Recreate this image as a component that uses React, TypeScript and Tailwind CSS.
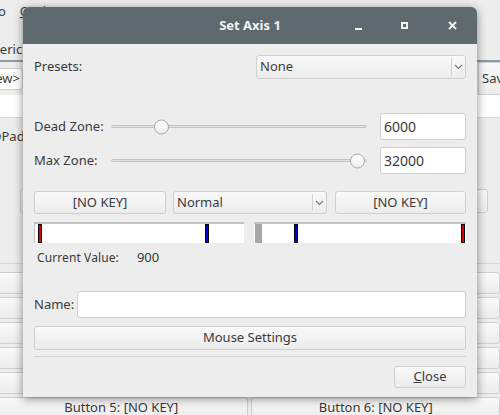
import React from "react";

const btnBase =
  "flex items-center rounded-[3px] border border-[#cfcfcf] bg-gradient-to-b from-[#f9f9f9] to-[#ececec] text-[13px] text-[#3a3a3a]";
const btn = `${btnBase} justify-center`;
const field = "rounded-[3px] border border-[#cfcfcf] bg-white";

function Chevron() {
  return (
    <svg width="9" height="6" viewBox="0 0 9 6" className="text-[#7a7a7a]">
      <polyline points="1,1 4.5,4.5 8,1" fill="none" stroke="currentColor" strokeWidth="1.2" />
    </svg>
  );
}

function Combo({ label, w }: { label: string; w: string }) {
  return (
    <div className={`${btnBase} ${w} justify-between pl-[3px]`}>
      <span>{label}</span>
      <div className="flex h-full items-center">
        <div className="h-[80%] w-px bg-[#d3d3d3]" />
        <div className="flex w-[13px] items-center justify-center">
          <Chevron />
        </div>
      </div>
    </div>
  );
}

function Slider({ pos }: { pos: number }) {
  return (
    <div className="relative flex h-full w-[256px] items-center">
      <div className="h-[3px] w-full rounded-full border border-[#c4c4c4] bg-[#e2e2e2]" />
      <div
        className="absolute top-1/2 h-[15px] w-[15px] -translate-y-1/2 rounded-full border border-[#a9a9a9] bg-gradient-to-b from-white to-[#eeeeee]"
        style={{ left: pos }}
      />
    </div>
  );
}

function Marker({ left, color }: { left: number; color: string }) {
  return (
    <div
      className={`absolute top-0 bottom-0 w-[4px] border border-black ${color}`}
      style={{ left }}
    />
  );
}

function BgRow({ a, b }: { a: string; b: string }) {
  return (
    <div className="flex h-[22px] gap-[3px]">
      <div className={`${btn} -ml-[6px] w-[256px]`}>{a}</div>
      <div className={`${btn} w-[250px]`}>{b}</div>
    </div>
  );
}

export default function App() {
  return (
    <div className="relative h-[415px] w-[500px] overflow-hidden bg-[#ededed] font-['Noto_Sans',sans-serif] text-[13px] text-[#3a3a3a]">
      {/* main window behind */}
      <div className="flex flex-col">
        <div className="flex h-[24px] items-center gap-[14px]">
          <span className="-ml-[19px]">Info</span>
          <span>
            <span className="underline">O</span>ptions
          </span>
        </div>
        <div className="mt-[16px] flex h-[20px] items-center">
          <span className="-ml-[25px]">Generic</span>
        </div>
        <div className="h-[2px] bg-[#8d9aa1]" />
        <div className="flex h-[33px] items-center justify-between">
          <div className={`${field} -ml-[30px] flex h-[22px] w-[53px] items-center justify-end pr-[2px]`}>
            &lt;New&gt;
          </div>
          <div className={`${btnBase} -mr-[40px] h-[33px] w-[62px] rounded-none pl-[3px]`}>Save</div>
        </div>
        <div className="h-[23px] border-b border-[#d8d8d8] bg-white" />
        <div className="mt-[10px] flex h-[18px] items-center">
          <span className="-ml-[8px]">DPad</span>
        </div>
        <div className="mt-[43px] flex h-[24px] pl-[20px] pr-[12px]">
          <div className={`${btn} w-full`}>Stick</div>
        </div>
        <div className="mt-[50px] h-px bg-[#d6d6d6]" />
        <div className="mt-[8px] flex flex-col gap-[3px]">
          <BgRow a="Axis 1" b="Axis 2" />
          <BgRow a="Axis 3" b="Axis 4" />
          <BgRow a="Button 1: [NO KEY]" b="Button 2: [NO KEY]" />
          <BgRow a="Button 3: [NO KEY]" b="Button 4: [NO KEY]" />
          <BgRow a="Axis 5" b="Axis 6" />
          <BgRow a="Button 5: [NO KEY]" b="Button 6: [NO KEY]" />
        </div>
      </div>

      {/* dialog window */}
      <div className="absolute left-[23px] top-[7px] flex h-[390px] w-[454px] flex-col overflow-hidden rounded-t-[6px] bg-[#ededed] shadow-[0_2px_10px_rgba(0,0,0,0.45)]">
        <div className="relative flex h-[37px] shrink-0 items-center justify-center bg-[#5e6a6d]">
          <span className="text-[13px] font-bold text-[#f3f3f3]">Set Axis 1</span>
          <div className="absolute right-0 top-0 flex h-full items-center">
            <div className="flex w-[46px] items-end justify-center pt-[6px]">
              <div className="h-[2px] w-[7px] bg-[#f3f3f3]" />
            </div>
            <div className="flex w-[46px] items-center justify-center">
              <div className="h-[7px] w-[7px] border-2 border-[#f3f3f3]" />
            </div>
            <div className="flex w-[50px] items-center justify-center">
              <svg width="9" height="9" viewBox="0 0 9 9">
                <path d="M1 1 L8 8 M8 1 L1 8" stroke="#f3f3f3" strokeWidth="2" />
              </svg>
            </div>
          </div>
        </div>

        <div className="flex flex-col px-[11px]">
          <div className="mt-[11px] flex h-[24px] items-center justify-between">
            <span>Presets:</span>
            <Combo label="None" w="h-full w-[210px]" />
          </div>

          <div className="mt-[34px] flex h-[27px] items-center">
            <span className="w-[77px]">Dead Zone:</span>
            <Slider pos={43} />
            <div className={`${field} ml-auto flex h-full w-[86px] items-center pl-[3px] text-[14px]`}>6000</div>
          </div>
          <div className="mt-[7px] flex h-[27px] items-center">
            <span className="w-[77px]">Max Zone:</span>
            <Slider pos={239} />
            <div className={`${field} ml-auto flex h-full w-[86px] items-center pl-[3px] text-[14px]`}>32000</div>
          </div>

          <div className="mt-[17px] flex h-[23px] gap-[7px]">
            <div className={`${btn} w-[132px]`}>[NO KEY]</div>
            <Combo label="Normal" w="w-[154px]" />
            <div className={`${btn} ml-[1px] w-[131px]`}>[NO KEY]</div>
          </div>

          <div className="mt-[8px] flex h-[21px] gap-[10px]">
            <div className="relative w-[210px] border-l border-t-2 border-[#c3c3c3] bg-white">
              <Marker left={3} color="bg-[#e00000]" />
              <Marker left={170} color="bg-[#0000e0]" />
            </div>
            <div className="relative w-[212px] border-t-2 border-[#c3c3c3] bg-white">
              <div className="absolute left-[1px] top-0 bottom-0 w-[7px] bg-[#a7a7a7]" />
              <Marker left={40} color="bg-[#0000e0]" />
              <Marker left={207} color="bg-[#e00000]" />
            </div>
          </div>

          <div className="mt-[7px] flex h-[16px] items-center gap-[18px] pl-[3px]">
            <span className="text-[12px] tracking-[0.1px]">Current Value:</span>
            <span>900</span>
          </div>

          <div className="mt-[25px] flex h-[27px] items-center">
            <span className="w-[43px]">Name:</span>
            <div className={`${field} h-full flex-1`} />
          </div>

          <div className={`${btn} mt-[8px] h-[24px] w-full`}>Mouse Settings</div>

          <div className="mt-[6px] h-px bg-[#d2d2d2]" />

          <div className="mt-[9px] flex h-[22px] justify-end">
            <div className={`${btn} w-[72px]`}>
              <span className="[text-decoration-skip-ink:none]">
                <u>C</u>lose
              </span>
            </div>
          </div>
        </div>
      </div>
    </div>
  );
}
